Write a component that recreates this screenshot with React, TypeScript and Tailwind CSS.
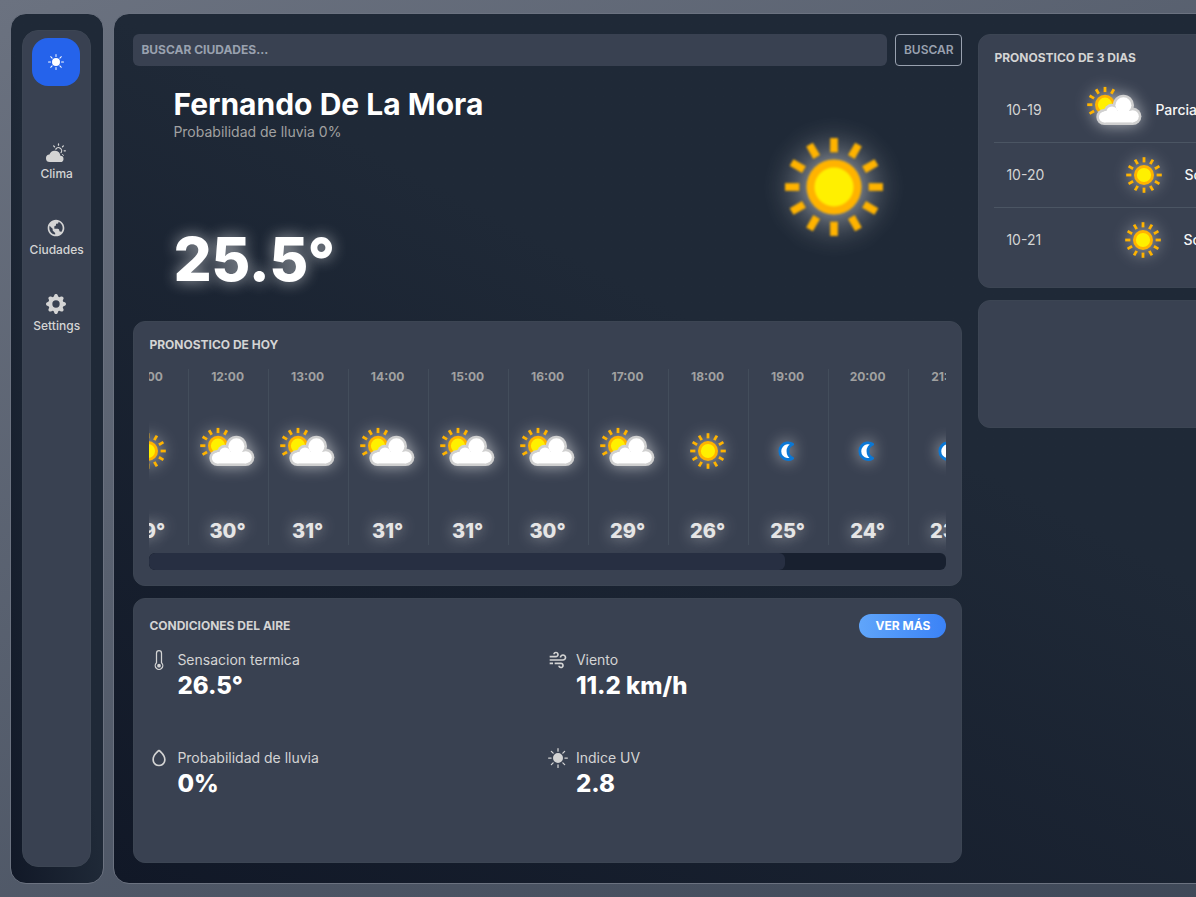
import React from "react";
import { BsSunFill, BsFillCloudSunFill, BsThermometer, BsGearFill } from "react-icons/bs";
import { BiWind, BiWorld, BiDroplet } from "react-icons/bi";

type Kind = "sun" | "cloudy" | "moon";

const smallIcon = "size-16 drop-shadow-[0_0_8px_rgba(255,255,255,0.6)]";
const bigIcon = "mt-[33px] size-[176px] blur-[0.8px] drop-shadow-[0_0_12px_rgba(255,255,255,0.65)]";

function Rays({ cx, cy, angles }: { cx: number; cy: number; angles: number[] }) {
  return (
    <g stroke="#ffb300" strokeWidth="2.8">
      {angles.map((a) => (
        <line key={a} x1={cx} y1={cy - 12.6} x2={cx} y2={cy - 17.8} transform={`rotate(${a} ${cx} ${cy})`} />
      ))}
    </g>
  );
}

function Disc({ cx, cy }: { cx: number; cy: number }) {
  return (
    <>
      <circle cx={cx} cy={cy} r="10" fill="#ffb300" />
      <circle cx={cx} cy={cy} r="7.1" fill="#fff000" />
    </>
  );
}

const puffs = [
  [21.3, 39, 8],
  [29, 34, 8.2],
  [40.4, 27.3, 10.6],
  [49.7, 38.3, 8.7],
];

function WeatherIcon({ kind, className = smallIcon }: { kind: Kind; className?: string }) {
  return (
    <svg viewBox="0 0 64 64" className={`${className} shrink-0`}>
      {kind === "sun" && (
        <>
          <Rays cx={32} cy={32} angles={[0, 30, 60, 90, 120, 150, 180, 210, 240, 270, 300, 330]} />
          <Disc cx={32} cy={32} />
        </>
      )}
      {kind === "cloudy" && (
        <>
          <Rays cx={22} cy={26.7} angles={[-120, -90, -60, -30, 0, 30]} />
          <Disc cx={22} cy={26.7} />
          <g fill="#d0d0d0">
            {puffs.map(([x, y, r]) => <circle key={x} cx={x} cy={y} r={r} />)}
            <rect x="21.3" y="32" width="28.4" height="15" />
          </g>
          <g fill="#ffffff">
            {puffs.map(([x, y, r]) => <circle key={x} cx={x} cy={y} r={r - 2.6} />)}
            <rect x="21.3" y="33" width="28.4" height="11.4" />
          </g>
        </>
      )}
      {kind === "moon" && (
        <path
          d="M36.6 25.2A8.3 8.3 0 1 0 36.6 39.2A7.6 7.6 0 0 1 36.6 25.2Z"
          fill="#ffffff"
          stroke="#0a78d6"
          strokeWidth="2.8"
          strokeLinejoin="round"
        />
      )}
    </svg>
  );
}

const nav = [
  { label: "Clima", Icon: BsFillCloudSunFill },
  { label: "Ciudades", Icon: BiWorld },
  { label: "Settings", Icon: BsGearFill },
];

const hours: { time: string; kind: Kind; temp: string }[] = [
  { time: "11:00", kind: "sun", temp: "29°" },
  { time: "12:00", kind: "cloudy", temp: "30°" },
  { time: "13:00", kind: "cloudy", temp: "31°" },
  { time: "14:00", kind: "cloudy", temp: "31°" },
  { time: "15:00", kind: "cloudy", temp: "31°" },
  { time: "16:00", kind: "cloudy", temp: "30°" },
  { time: "17:00", kind: "cloudy", temp: "29°" },
  { time: "18:00", kind: "sun", temp: "26°" },
  { time: "19:00", kind: "moon", temp: "25°" },
  { time: "20:00", kind: "moon", temp: "24°" },
  { time: "21:00", kind: "moon", temp: "23°" },
];

const conditions = [
  { label: "Sensacion termica", value: "26.5°", Icon: BsThermometer },
  { label: "Viento", value: "11.2 km/h", Icon: BiWind },
  { label: "Probabilidad de lluvia", value: "0%", Icon: BiDroplet },
  { label: "Indice UV", value: "2.8", Icon: BsSunFill },
];

const days: { date: string; kind: Kind; text: string; offset: string }[] = [
  { date: "10-19", kind: "cloudy", text: "Parcialmente nublado", offset: "w-[77px]" },
  { date: "10-20", kind: "sun", text: "Soleado", offset: "w-[106px]" },
  { date: "10-21", kind: "sun", text: "Soleado", offset: "w-[105px]" },
];

const heading = "text-xs font-bold uppercase leading-4 text-neutral-300";

export default function App() {
  return (
    <div className="h-[897px] w-full overflow-hidden font-['Inter',sans-serif]">
      <div className="flex h-full w-[1780px] gap-[9px] bg-linear-to-br from-[#6b7280] to-[#374151] px-[10px] pt-[13px] pb-[13px]">
        <aside className="w-[94px] shrink-0 rounded-2xl border border-[#6b7280] bg-linear-to-tr from-[#111827] via-[#1f2937] to-[#1f2937] py-4 pr-[11.6px] pl-[11px]">
          <nav className="flex h-full flex-col items-center rounded-2xl border border-[#3c4553] bg-[#394151] pt-[7px]">
            <div className="mr-px flex size-12 items-center justify-center rounded-2xl bg-[#2563eb] text-white">
              <BsSunFill size={16} />
            </div>
            <div className="mt-14 flex flex-col items-center gap-9">
              {nav.map(({ label, Icon }) => (
                <div key={label} className="flex h-10 flex-col items-center gap-1 text-neutral-300">
                  <Icon size={20} className="mr-px" />
                  <span className="text-xs leading-4 font-medium">{label}</span>
                </div>
              ))}
            </div>
          </nav>
        </aside>

        <main className="flex flex-1 gap-4 rounded-2xl border border-[#6b7280] bg-linear-to-tr from-[#111827] via-[#1f2937] to-[#1f2937] py-5 pr-5 pl-[19.4px]">
          <div className="flex w-[829px] shrink-0 flex-col">
            <div className="flex h-8 gap-2">
              <div className="flex flex-1 items-center rounded-md bg-[#394151] px-2 text-xs font-bold text-gray-400">
                BUSCAR CIUDADES...
              </div>
              <button className="w-[67.3px] rounded border border-gray-400 text-xs font-semibold text-gray-400">BUSCAR</button>
            </div>

            <section className="flex h-[255px] justify-between pr-[40.4px] pl-10">
              <div className="flex flex-col pt-5">
                <h1 className="text-3xl leading-9 font-bold text-white">Fernando De La Mora</h1>
                <p className="text-sm leading-5 text-neutral-400">Probabilidad de lluvia 0%</p>
                <p className="mt-[87px] text-6xl leading-[60px] font-extrabold tracking-[-0.4px] text-white [text-shadow:0_0_15px_rgba(255,255,255,0.6)]">25.5°</p>
              </div>
              <WeatherIcon kind="sun" className={bigIcon} />
            </section>

            <section className="h-[265px] rounded-xl border border-[#3c4553] bg-[#394151] px-[15px] pt-[15px]">
              <h2 className={heading}>Pronostico de hoy</h2>
              <div className="mt-4 overflow-hidden">
                <div className="-ml-[40.8px] flex h-[184px] w-[880px]">
                  {hours.map((h) => (
                    <div
                      key={h.time}
                      className="flex h-44 w-20 shrink-0 flex-col items-center justify-between border-r border-[#4b5563]/60 pr-px"
                    >
                      <span className="text-xs leading-4 font-bold text-neutral-400">{h.time}</span>
                      <div className="mb-px">
                        <WeatherIcon kind={h.kind} />
                      </div>
                      <span className="text-xl leading-7 font-extrabold text-neutral-200 [text-shadow:0_0_15px_rgba(255,255,255,0.6)]">{h.temp}</span>
                    </div>
                  ))}
                </div>
                <div className="h-[17px] overflow-hidden rounded-md bg-[#18202f]">
                  <div className="h-full w-[636px] rounded-md bg-[#272f42]" />
                </div>
              </div>
            </section>

            <section className="mt-3 h-[265px] rounded-xl border border-[#3c4553] bg-[#394151] px-[15px] pt-[15px]">
              <div className="flex h-6 items-center justify-between">
                <h2 className={heading}>Condiciones del aire</h2>
                <button className="h-6 w-[87px] rounded-full bg-linear-to-r from-[#60a5fa] to-[#3b82f6] text-xs font-bold text-white">VER MÁS</button>
              </div>
              <div className="mt-3 grid grid-cols-2">
                {conditions.map(({ label, value, Icon }) => (
                  <div key={label} className="flex h-[98px] gap-2 text-neutral-300">
                    <Icon size={20} />
                    <div>
                      <div className="text-sm leading-5">{label}</div>
                      <div className="text-2xl leading-8 font-extrabold text-white">{value}</div>
                    </div>
                  </div>
                ))}
              </div>
            </section>
          </div>

          <div className="flex flex-1 flex-col gap-3">
            <section className="h-[254px] rounded-xl border border-[#3c4553] bg-[#394151] px-[15px] pt-[15px]">
              <h2 className={heading}>Pronostico de 3 dias</h2>
              <div className="mt-3">
                {days.map((d) => (
                  <div key={d.date} className="flex h-[65px] items-center border-b border-[#4b5563] pl-3 last:h-[63px] last:border-0">
                    <span className={`${d.offset} text-sm text-neutral-300`}>{d.date}</span>
                    <WeatherIcon kind={d.kind} />
                    <span className="ml-2 text-sm font-medium text-neutral-100">{d.text}</span>
                  </div>
                ))}
              </div>
            </section>
            <section className="h-32 rounded-xl border border-[#3c4553] bg-[#394151]" />
          </div>
        </main>
      </div>
    </div>
  );
}
